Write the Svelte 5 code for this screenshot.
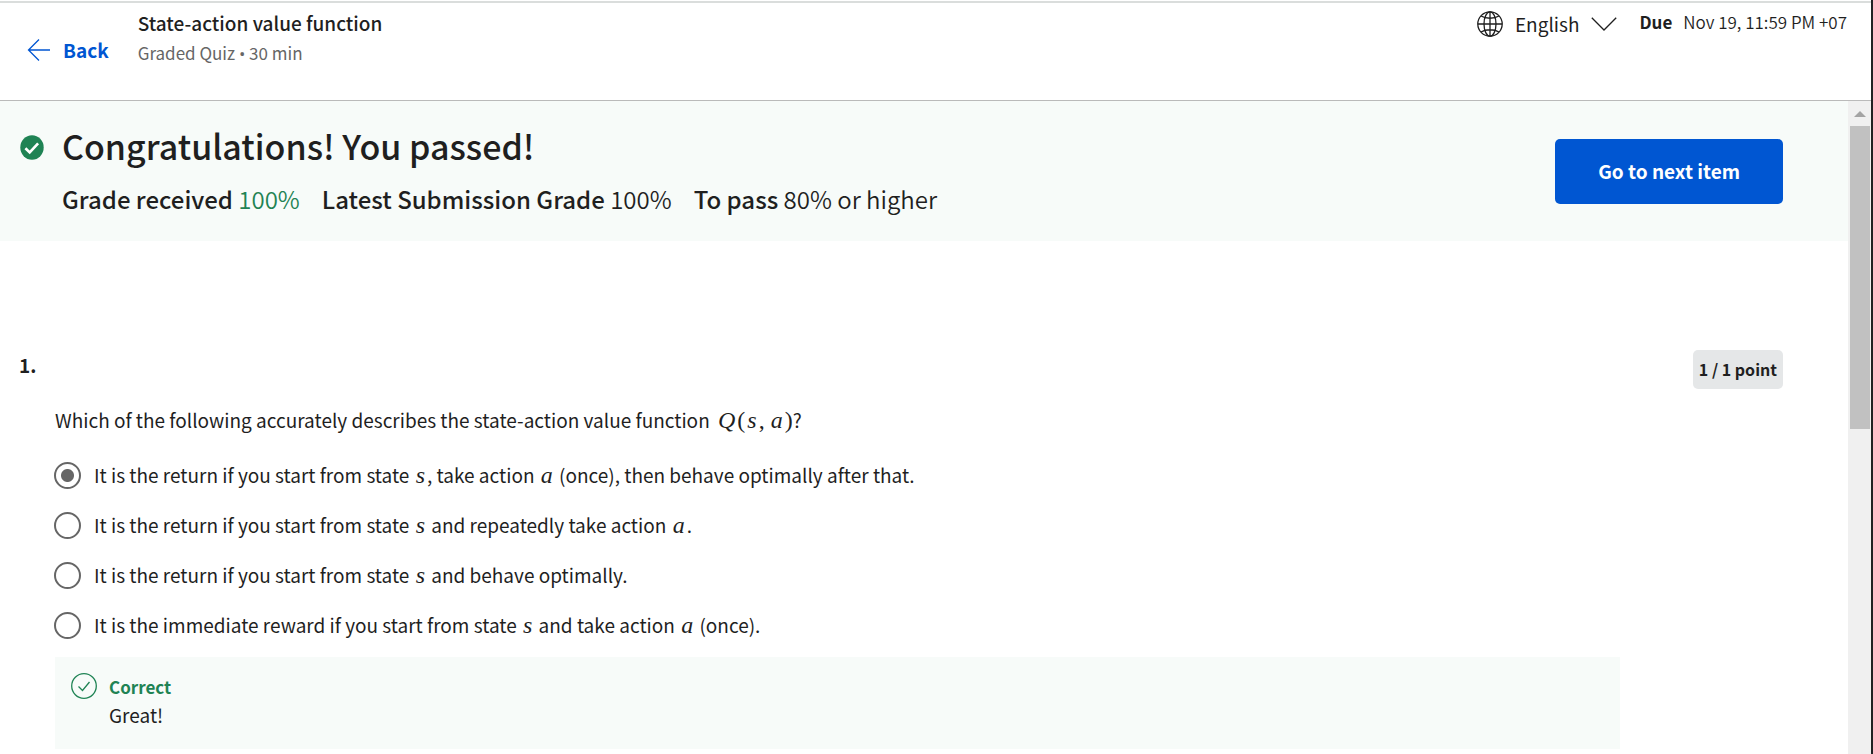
<script>
  let selected = $state(0);
  const options = [
    [['It is the return if you start from state '], ['s', 1], [', take action '], ['a', 1], [' (once), then behave optimally after that.']],
    [['It is the return if you start from state '], ['s', 1], [' and repeatedly take action '], ['a', 1], ['.']],
    [['It is the return if you start from state '], ['s', 1], [' and behave optimally.']],
    [['It is the immediate reward if you start from state '], ['s', 1], [' and take action '], ['a', 1], [' (once).']]
  ];
</script>

<div class="app">
  <div class="page">
    <header>
      <a class="back" href="#back">
        <svg width="24" height="24" viewBox="0 0 24 24" fill="none" stroke="currentColor" stroke-width="1.3"><path d="M23 12H1.5M12 1.5 1.5 12 12 22.5" /></svg>
        Back
      </a>
      <div class="title">
        <h1>State-action value function</h1>
        <p>Graded Quiz <span class="dot">•</span> 30 min</p>
      </div>
      <button class="lang" type="button">
        <svg width="26" height="26" viewBox="0 0 26 26" fill="none" stroke="currentColor" stroke-width="1.3"><circle cx="13" cy="13" r="12.2" /><ellipse cx="13" cy="13" rx="6" ry="12.2" /><path d="M.8 13h24.4M13 .8v24.4M4 5c5 3 13 3 18 0M4 21c5-3 13-3 18 0" /></svg>
        <span>English</span>
        <svg width="26" height="14" viewBox="0 0 26 14" fill="none" stroke="currentColor" stroke-width="1.3"><path d="M.8.8 13 13 25.2.8" /></svg>
      </button>
      <div class="due"><b>Due</b><span>Nov 19, 11:59 PM +07</span></div>
    </header>

    <div class="body">
      <main>
        <section class="banner">
          <svg class="passed" width="24" height="25" viewBox="0 0 24 25"><ellipse cx="12" cy="12.5" rx="11.7" ry="12.2" fill="#1f8354" /><path d="m5.4 13.3 4.3 4.2 8.4-9.2" fill="none" stroke="#fff" stroke-width="2.6" /></svg>
          <div class="result">
            <h2>Congratulations! You passed!</h2>
            <div class="grades">
              <span><b>Grade received</b> <em>100%</em></span>
              <span><b>Latest Submission Grade</b> 100%</span>
              <span><b>To pass</b> 80% or higher</span>
            </div>
          </div>
          <button class="next" type="button">Go to next item</button>
        </section>

        <section class="question">
          <div class="number">1.</div>
          <div class="points">1 / 1 point</div>
          <fieldset>
            <legend>Which of the following accurately describes the state-action value function <span class="math formula"><i>Q</i><span>(</span><i>s</i><span class="comma">,</span><i>a</i><span>)</span></span>?</legend>
            {#each options as parts, i}
              <label>
                <input type="radio" name="answer" value={i} bind:group={selected} />
                <span>{#each parts as [text, math]}{#if math}<i class="math">{text}</i>{:else}{text}{/if}{/each}</span>
              </label>
            {/each}
          </fieldset>
          <div class="feedback">
            <svg width="26" height="26" viewBox="0 0 26 26" fill="none" stroke="#1f8354" stroke-width="1.3"><circle cx="13" cy="13" r="12.3" /><path d="m7.5 13.5 4 4 7-8.5" /></svg>
            <div>
              <strong>Correct</strong>
              <p>Great!</p>
            </div>
          </div>
        </section>
      </main>
      <div class="scrollbar">
        <svg width="12" height="6" viewBox="0 0 12 6"><path d="M6 0 12 6H0z" fill="#a3a3a3" /></svg>
        <div class="thumb"></div>
      </div>
    </div>
  </div>
</div>

<style>
  :global(body) { margin: 0; }
  .app {
    min-height: 100vh;
    box-sizing: border-box;
    display: flex;
    border-right: 2px solid #212224;
    background: #fff;
    color: #1f1f1f;
    font-family: "Noto Sans CJK SC", "Noto Sans", sans-serif;
    font-size: 19px;
    line-height: 28px;
  }
  h1, h2, p { margin: 0; }
  button { font: inherit; color: inherit; border: 0; background: none; padding: 0; cursor: pointer; }
  .page { flex: 1; display: flex; flex-direction: column; border-top: 1px solid #fff; }
  header {
    display: flex;
    align-items: flex-start;
    border-top: 2px solid #dadddc;
    border-bottom: 1px solid #bababa;
    padding: 5px 24px 32px 27px;
  }
  .back {
    display: flex;
    align-items: center;
    gap: 12px;
    margin: 28px 29px 0 0;
    color: #0056d2;
    font-weight: 700;
    text-decoration: none;
  }
  .title { flex: 1; }
  h1 { font-size: 19px; line-height: 30px; font-weight: 500; }
  .title p { font-size: 17px; line-height: 30px; color: #666; }
  .dot { font-family: "Open Sans", sans-serif; line-height: 1; }
  .lang { display: flex; align-items: center; gap: 12px; margin-top: 2px; }
  .due { display: flex; gap: 11px; font-size: 17px; line-height: 28px; margin-left: 22px; }
  .due span { font-weight: 350; }

  .body { flex: 1; display: flex; }
  main { flex: 1; }
  .banner {
    display: flex;
    align-items: center;
    padding: 21px 65px 25px 20px;
    background: #f7fbf9;
  }
  .passed { align-self: flex-start; margin-top: 13px; }
  .result { flex: 1; margin-left: 18px; }
  h2 { font-size: 34px; line-height: 48px; font-weight: 500; }
  .grades { display: flex; gap: 22px; margin-top: 12px; font-size: 24px; line-height: 34px; font-weight: 350; }
  .grades b { font-weight: 500; }
  .grades em { font-style: normal; color: #1f8354; }
  .next {
    margin-top: 4px;
    padding: 18px 43px 19px;
    border-radius: 5px;
    background: #0056d2;
    color: #fff;
    font-weight: 700;
  }

  .question {
    display: grid;
    grid-template-columns: 55px 1fr 163px;
    padding: 109px 65px 4px 0;
  }
  .number { padding: 1px 0 0 19px; font-weight: 700; }
  .points {
    grid-column: 3;
    justify-self: end;
    padding: 5px 6px 6px;
    border-radius: 5px;
    background: #e5e7e8;
    font-size: 16px;
    font-weight: 700;
  }
  fieldset { grid-column: 2; border: 0; margin: 17px 0 0; padding: 0; min-width: 0; }
  legend { padding: 0; margin-bottom: 16px; }
  label { display: flex; align-items: center; gap: 13px; height: 50px; margin-left: -1px; }
  input {
    appearance: none;
    width: 27px;
    height: 27px;
    margin: 0;
    box-sizing: border-box;
    border: 2px solid #666;
    border-radius: 50%;
    background: #fff;
  }
  input:checked { background: radial-gradient(circle, #666 6px, #fff 7px); }
  .math { font-family: "Liberation Serif", serif; font-size: 24px; line-height: 1; }
  i.math { margin: 0 2px; }
  .formula { margin-left: 2px; }
  .formula i { margin: 0 2px; }
  .comma { margin-right: 4px; }
  .feedback {
    grid-column: 2;
    display: flex;
    gap: 12px;
    margin-top: 7px;
    padding: 16px 16px 20px;
    background: #f7fbf9;
  }
  .feedback strong { display: block; font-size: 17px; color: #1f8354; }

  .scrollbar {
    width: 23px;
    display: flex;
    flex-direction: column;
    align-items: center;
    background: #f0f0f0;
  }
  .scrollbar svg { margin: 10px 0 9px; }
  .thumb { width: 20px; height: 303px; background: #c1c1c1; }
</style>
